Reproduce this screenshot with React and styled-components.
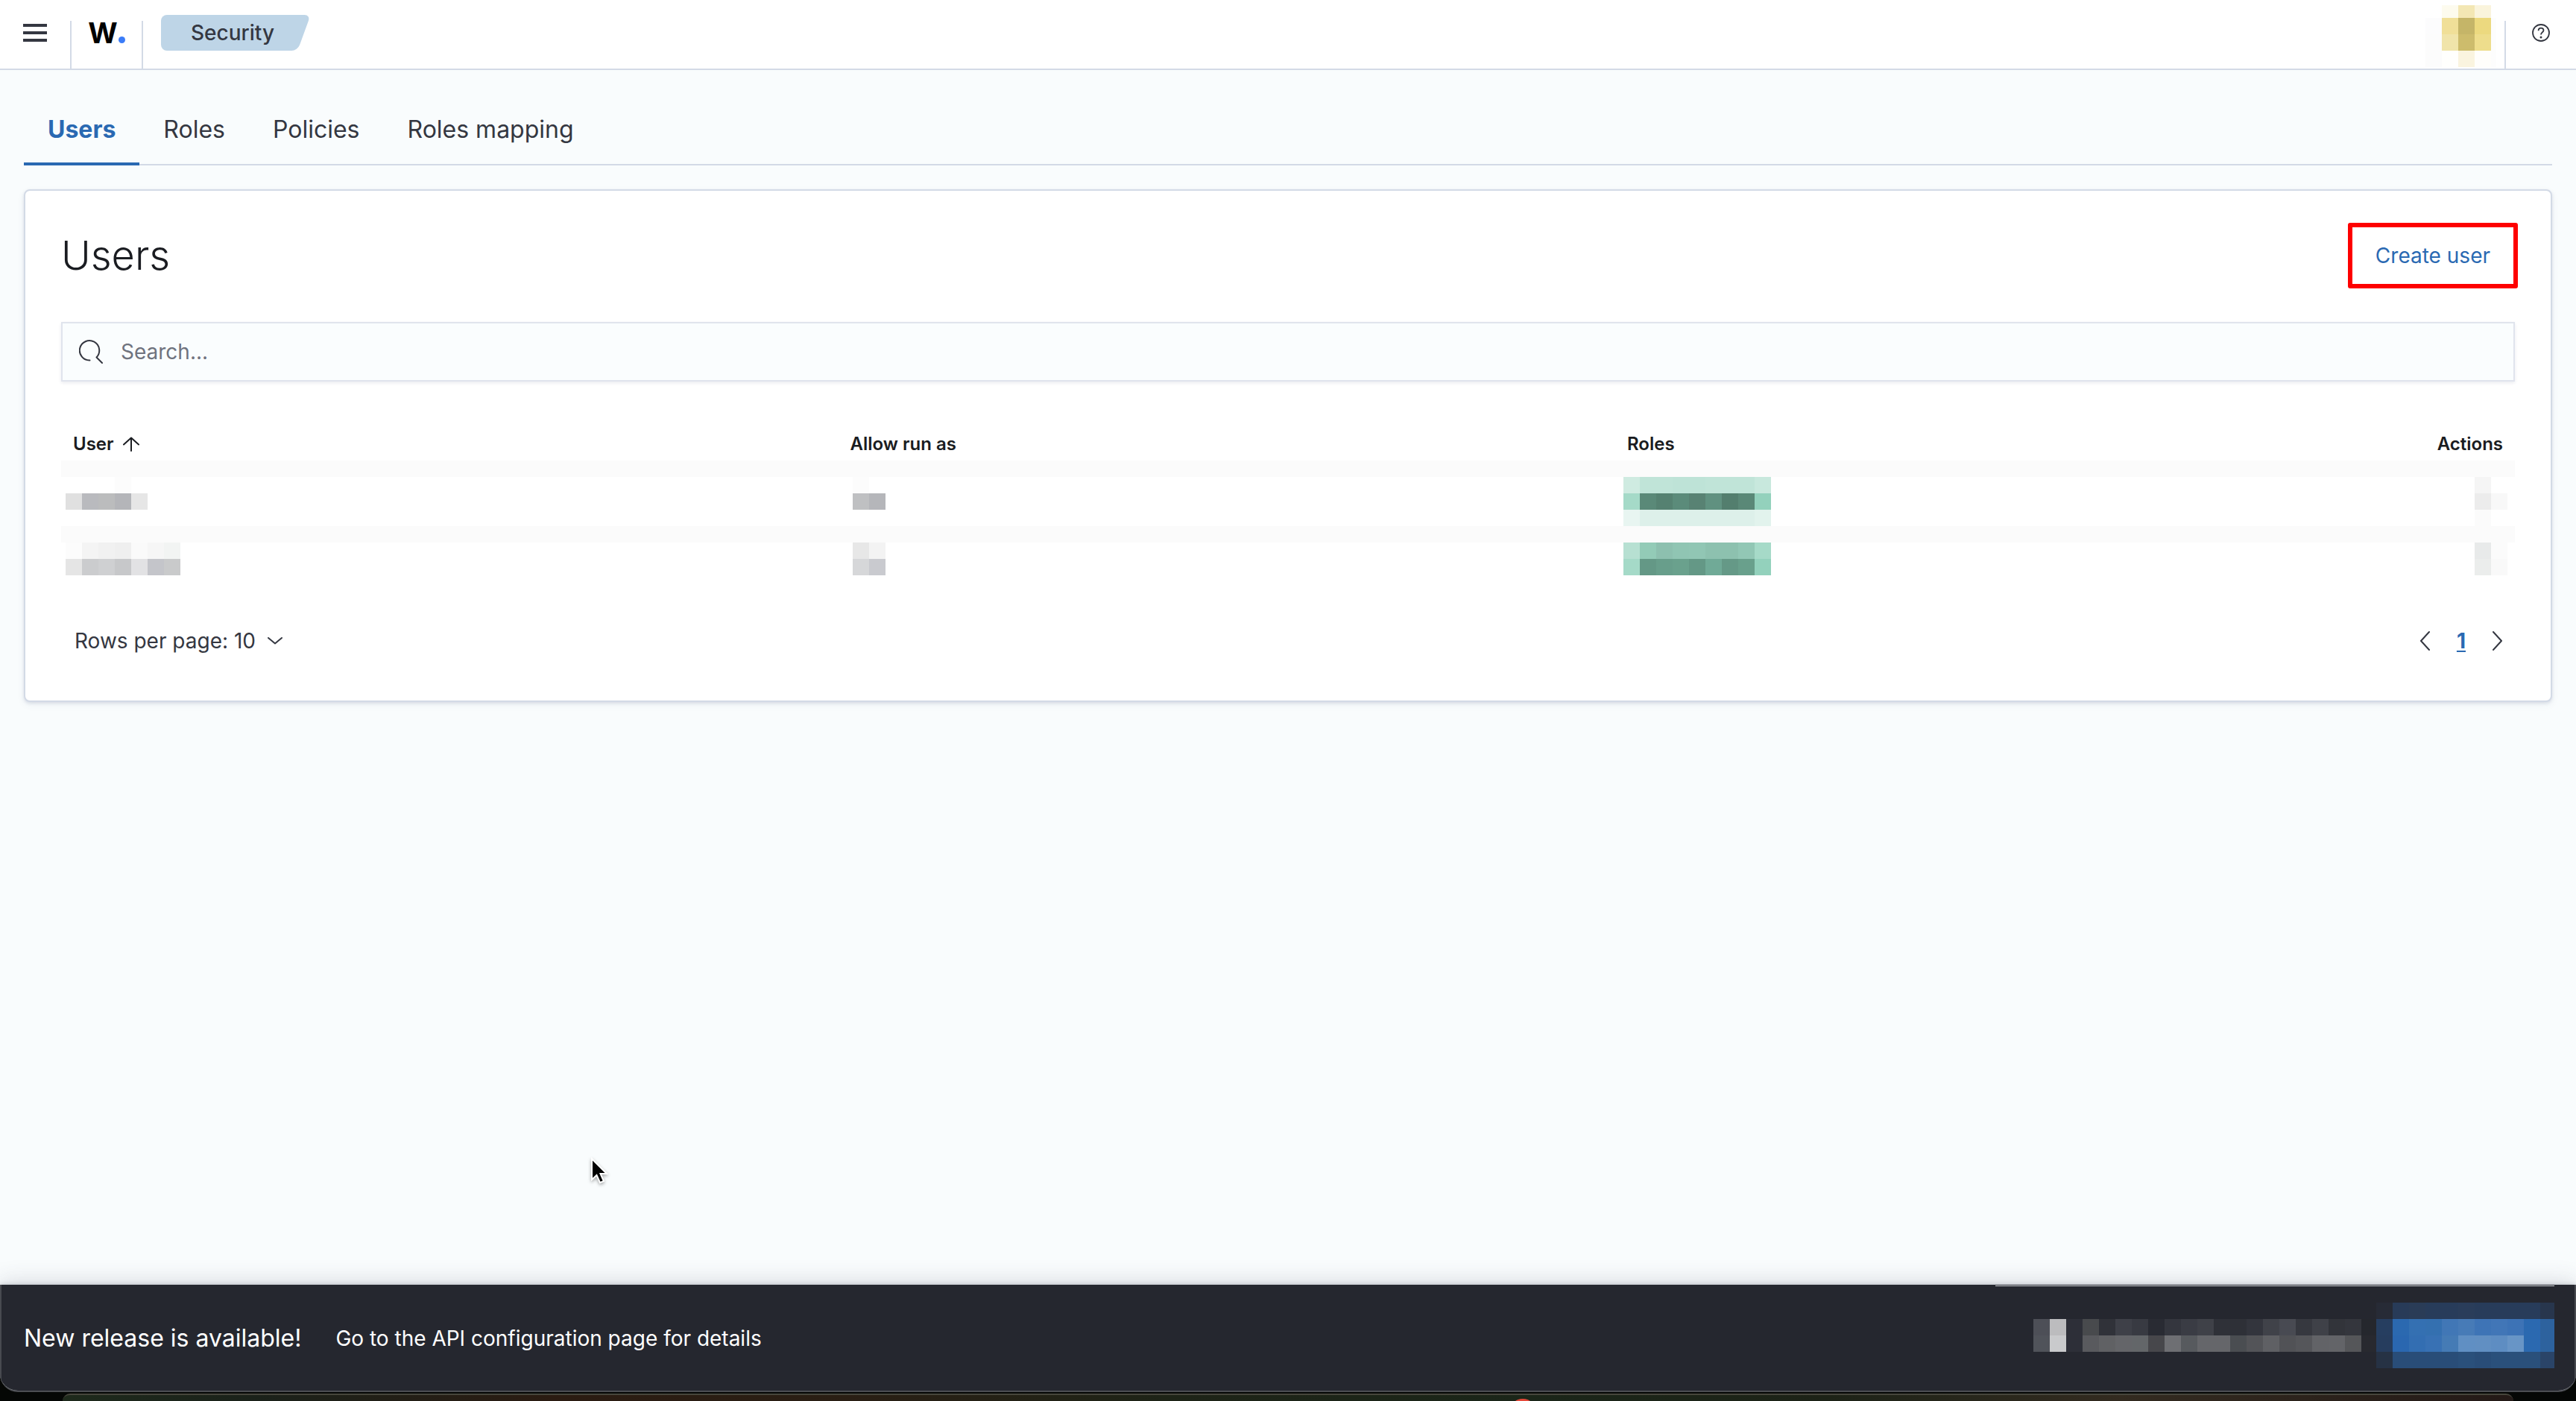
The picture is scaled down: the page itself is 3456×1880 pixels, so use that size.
import React from 'react'
import styled, { createGlobalStyle, ThemeProvider } from 'styled-components'

const theme = {
  colors: {
    text: '#343741',
    title: '#1a1c21',
    subdued: '#6f737e',
    primary: '#2a69b2',
    border: '#d3dae6',
    page: '#f9fcfd',
    bar: '#25272f',
  },
}

const GlobalStyle = createGlobalStyle`
  * { box-sizing: border-box; }
  body {
    margin: 0;
    background: #000;
    font-family: Inter, "Liberation Sans", sans-serif;
    font-size: 28px;
    line-height: 40px;
    color: ${theme.colors.text};
  }
  button, input { font: inherit; color: inherit; }
  button { margin: 0; padding: 0; border: 0; background: none; cursor: pointer; }
`

const Desktop = styled.div`
  min-height: 100vh;
  display: flex;
  flex-direction: column;
  overflow: hidden;
  background: #050705;
`

const Window = styled.div`
  flex: 1;
  display: flex;
  flex-direction: column;
  overflow: hidden;
  border-bottom: 2px solid #4c4e53;
  border-radius: 0 0 24px 24px;
  background: ${({ theme }) => theme.colors.page};
`

/* header */

const Header = styled.header`
  display: flex;
  height: 94px;
  border-bottom: 2px solid ${({ theme }) => theme.colors.border};
  background: #fff;
`

const HeaderItem = styled.div`
  display: flex;
  align-items: center;
  justify-content: center;
  width: 94px;
  padding-bottom: 4px;
`

const IconButton = styled.button`
  display: flex;
  align-items: center;
  justify-content: center;
`

const Divider = styled.div`
  width: 2px;
  height: 64px;
  align-self: flex-end;
  background: ${({ theme }) => theme.colors.border};
`

const Logo = styled.a`
  display: flex;
  align-items: baseline;
  gap: 1px;
  color: #000;
  font-size: 38px;
  font-weight: 700;
  text-decoration: none;
`

const LogoDot = styled.span`
  width: 9px;
  height: 9px;
  border-radius: 50%;
  background: #3b7cf8;
`

const Breadcrumbs = styled.nav`
  flex: 1;
  display: flex;
  align-items: center;
  padding: 0 0 4px 24px;
`

const Crumb = styled.span`
  position: relative;
  z-index: 0;
  height: 48px;
  padding: 0 48px 0 40px;
  line-height: 48px;
  font-weight: 500;

  &::before, &::after {
    content: '';
    position: absolute;
    z-index: -1;
    top: 0;
    bottom: 0;
    background: #bed5e7;
  }
  &::before {
    left: 0;
    right: 40px;
    border-radius: 8px 0 0 8px;
  }
  &::after {
    left: 40px;
    right: 8px;
    border-radius: 0 8px 8px 0;
    transform: skewX(-20deg);
  }
`

const UserMenu = styled.button`
  display: flex;
  align-self: flex-start;
  padding: 7px 11px 0 0;
`

/* tabs */

const Main = styled.main`
  position: relative;
  flex: 1;
  padding: 32px;
`

const Tabs = styled.div`
  display: flex;
  height: 96px;
  margin-bottom: 32px;
  box-shadow: inset 0 -2px 0 ${({ theme }) => theme.colors.border};
`

const Tab = styled.button`
  padding: 0 32px;
  font-size: 32px;
  font-weight: ${({ $active }) => ($active ? 700 : 400)};
  color: ${({ $active, theme }) => ($active ? theme.colors.primary : theme.colors.text)};
  border-top: 4px solid transparent;
  border-bottom: 4px solid ${({ $active, theme }) => ($active ? theme.colors.primary : 'transparent')};
`

/* panel */

const Panel = styled.section`
  padding: 43px 48px 56px;
  border: 2px solid ${({ theme }) => theme.colors.border};
  border-radius: 8px;
  background: #fff;
  box-shadow: 0 2px 4px rgba(60, 70, 110, 0.14), 0 4px 12px rgba(60, 70, 110, 0.05);
`

const PanelHeader = styled.div`
  display: flex;
  align-items: center;
  justify-content: space-between;
  height: 88px;
  margin: 0 -4px 45px 0;
`

const Title = styled.h1`
  margin: 0;
  font-size: 54px;
  font-weight: 300;
  line-height: 64px;
  color: ${({ theme }) => theme.colors.title};
`

const CreateButton = styled.button`
  height: 88px;
  padding: 0 31px;
  border: 6px solid #fe0000;
  border-radius: 3px;
  color: ${({ theme }) => theme.colors.primary};
`

const SearchBox = styled.label`
  display: flex;
  align-items: center;
  gap: 24px;
  height: 80px;
  padding: 0 22px;
  border: 2px solid #e0e4ed;
  background: #fafdfe;
  box-shadow: 0 2px 4px rgba(60, 70, 110, 0.1);
`

const SearchInput = styled.input`
  flex: 1;
  padding: 0;
  border: 0;
  outline: 0;
  background: transparent;

  &::placeholder {
    color: ${({ theme }) => theme.colors.subdued};
    opacity: 1;
  }
`

const Table = styled.table`
  width: 100%;
  margin-top: 58px;
  table-layout: fixed;
  border-collapse: separate;
  border-spacing: 0;
`

const HeadCell = styled.th`
  width: ${({ $width }) => $width || 'auto'};
  height: 48px;
  padding: 4px 16px 0;
  vertical-align: middle;
  text-align: ${({ $align }) => $align || 'left'};
  font-size: 24px;
  font-weight: 600;
  line-height: 36px;
  color: ${({ theme }) => theme.colors.title};
`

const SortButton = styled.button`
  display: flex;
  align-items: center;
  gap: 12px;
`

const Cell = styled.td`
  height: 88px;
  padding: 0 10px 0 ${({ $inset }) => $inset || 0}px;
  vertical-align: top;
  border-top: 22px solid #fbfbfb;
`

const Mosaic = styled.div`
  display: grid;
  grid-template-columns: repeat(${({ $columns }) => $columns}, 22px);
  grid-auto-rows: 22px;
  justify-content: ${({ $align }) => $align || 'start'};
`

const Tile = styled.span`
  background: ${({ $color }) => $color};
`

const Pagination = styled.div`
  display: flex;
  align-items: center;
  justify-content: space-between;
  height: 48px;
  margin-top: 42px;
  padding: 0 16px 0 18px;
`

const RowsButton = styled.button`
  display: flex;
  align-items: center;
  gap: 16px;
`

const Pages = styled.nav`
  display: flex;
  align-items: center;
  gap: 36px;
`

const PageLink = styled.a`
  color: ${({ theme }) => theme.colors.primary};
  font-weight: 700;
  text-decoration: underline;
  text-decoration-thickness: 2px;
  text-underline-offset: 3px;
`

const Pointer = styled.svg`
  position: absolute;
  left: 790px;
  top: 1458px;
  filter: drop-shadow(0 2px 2px rgba(0, 0, 0, 0.35));
`

/* release bar */

const ReleaseBar = styled.footer`
  position: relative;
  display: flex;
  align-items: center;
  gap: 46px;
  height: 142px;
  padding: 2px 29px 0 32px;
  background: ${({ theme }) => theme.colors.bar};
  color: #fff;
  box-shadow: inset 2px 0 0 #484a50, inset -2px 0 0 #484a50, 0 0 6px rgba(30, 40, 60, 0.25), 0 -4px 28px rgba(60, 60, 90, 0.18);
`

const BarLine = styled.div`
  position: absolute;
  top: 1px;
  right: 29px;
  width: 750px;
  height: 1px;
  background: #d3d6da;
`

const ReleaseTitle = styled.strong`
  font-size: 32px;
  font-weight: 400;
`

const BarActions = styled.div`
  display: flex;
  align-items: center;
  margin-left: auto;
  padding-bottom: 8px;
`

const BarButton = styled.button`
  display: flex;
  overflow: hidden;
  width: ${({ $width }) => $width || 'auto'};
`

/* dock under the window */

const Dock = styled.div`
  position: relative;
  height: 10px;
  margin: 2px 84px 0;
  overflow: hidden;
  border-top: 2px solid #47463c;
  border-radius: 34px 34px 0 0;
  background: linear-gradient(90deg, #1e2a1c 0%, #1b221a 8%, #2b1c12 20%, #2a1f14 32%, #1e2417 45%, #1b2619 60%, #1d2317 72%, #332b20 84%, #241a17 100%);
`

const DockBadge = styled.span`
  position: absolute;
  top: 5px;
  left: 1941px;
  width: 36px;
  height: 36px;
  border-radius: 50%;
  background: #e5493a;
`

const avatar = [
  ['#fff', '#fdfbee', '#f3e7b4', '#faf4dc', '#fff'],
  ['#fcfcfd', '#f0df98', '#c5b568', '#ecd97f', '#fdfdfd'],
  ['#fcfcfc', '#f0e4aa', '#cdbc6c', '#eedd8c', '#fdfdfd'],
  ['#fcfcfc', '#fffffd', '#faf4df', '#fffefb', '#fdfdfd'],
]

const rows = [
  {
    user: [
      ['#fff', '#fff', '#fff', '#fcfcfc', '#fff'],
      ['#e0e0e0', '#b9babe', '#bbbcbd', '#b4b5b9', '#e6e6e6'],
    ],
    runAs: [
      ['#fcfcfc', '#fff'],
      ['#bfc0c2', '#b5b6ba'],
    ],
    roles: [
      ['#cfebe1', '#c0e4d8', '#c0e4d8', '#bee3d7', '#bee3d7', '#c0e4d8', '#c0e4d8', '#c0e4d8', '#c8e8dd'],
      ['#a5dac8', '#5a8978', '#558171', '#5b8b7a', '#588273', '#609180', '#537e6e', '#5a8877', '#93d1bc'],
      ['#e8f5f1', '#ddf0ea', '#ddf0ea', '#ddf0ea', '#ddf0ea', '#ddf0ea', '#ddf0ea', '#ddf0ea', '#e2f3ed'],
    ],
    actions: [
      ['#f5f5f5', '#fff'],
      ['#ececec', '#f8f8f8'],
      ['#fbfbfb', '#fff'],
    ],
  },
  {
    user: [
      ['#fcfcfc', '#f4f4f4', '#f1f1f1', '#efefef', '#fafafa', '#f6f6f6', '#f2f4f3'],
      ['#e5e5e5', '#cbccce', '#cfd0d2', '#c7c8ca', '#e2e2e4', '#c4c5ca', '#c9cacb'],
    ],
    runAs: [
      ['#e7e7e7', '#f3f3f3'],
      ['#d6d7d9', '#c9cacf'],
    ],
    roles: [
      ['#b7e0d2', '#93cbb7', '#8dc0af', '#90c5b3', '#91c6b4', '#8dc1af', '#8dc1af', '#92c7b5', '#a6dac8'],
      ['#a5dac8', '#649886', '#689e8b', '#6aa18d', '#649886', '#70aa97', '#659987', '#69a08c', '#93d1bc'],
    ],
    actions: [
      ['#e8eaea', '#fbfbfb'],
      ['#ebedec', '#f9f9f9'],
    ],
  },
]

const dismiss = [
  ['#4d4f57', '#bcbcbe', '#2d2f38', '#484a4d', '#303239', '#3e4048', '#383a42', '#292b33', '#34363e', '#3a3c44', '#3f4148', '#2f3138', '#2e3037', '#33353d', '#404249', '#484a52', '#36383f', '#3f4148', '#32343a', '#34363d', '#25272d'],
  ['#50535a', '#c9cacc', '#2d2f38', '#595a5e', '#606164', '#646569', '#636669', '#47474b', '#6e6f73', '#575a5e', '#65666a', '#65666a', '#4a4d51', '#535458', '#5f6064', '#515256', '#55565a', '#626367', '#636468', '#555659', '#28292f'],
]

const configure = [
  ['#272b36', '#283b58', '#2a3c57', '#283c5a', '#283c5a', '#2a3d5a', '#283c5a', '#283c5a', '#283c5a', '#283c5a', '#28364d'],
  ['#263e60', '#2b69b0', '#3470b2', '#3470b0', '#4177b6', '#477bb7', '#3e74b6', '#4176b7', '#3d73b6', '#2b69b0', '#2d629e'],
  ['#263d5e', '#2a67b0', '#336eb2', '#3871b4', '#457bb5', '#608fc3', '#618fc2', '#5e8dc2', '#6895c6', '#2b69b0', '#2d629e'],
  ['#263244', '#294d78', '#294d78', '#294d78', '#294d78', '#2a507b', '#294d78', '#2a507b', '#2a507b', '#2a507b', '#2a4468'],
]

const AvatarClip = styled.div`
  width: 95px;
  overflow: hidden;

  ${Mosaic} {
    grid-template-rows: 17px;
  }
`

const Redacted = ({ tiles, align }) => (
  <Mosaic $columns={tiles[0].length} $align={align} aria-hidden="true">
    {tiles.flat().map((color, i) => (
      <Tile key={i} $color={color} />
    ))}
  </Mosaic>
)

const Stroke = ({ width, height, d, strokeWidth = 2 }) => (
  <svg width={width} height={height} viewBox={`0 0 ${width} ${height}`} fill="none"
    stroke="currentColor" strokeWidth={strokeWidth} strokeLinecap="round" strokeLinejoin="round" aria-hidden="true">
    <path d={d} />
  </svg>
)

const MenuIcon = () => (
  <svg width="32" height="24" fill={theme.colors.text} aria-hidden="true">
    <rect width="32" height="4" />
    <rect y="10" width="32" height="4" />
    <rect y="20" width="32" height="4" />
  </svg>
)

const HelpIcon = () => (
  <svg width="24" height="24" viewBox="0 0 24 24" fill="none" stroke={theme.colors.text} strokeWidth="1.8" aria-hidden="true">
    <circle cx="12" cy="12" r="11" />
    <path d="M8.6 9.2C8.6 7 10 5.7 12 5.7s3.5 1.2 3.5 3.1c0 2.6-3.5 2.5-3.5 5.8" />
    <circle cx="12" cy="18" r="1.5" fill={theme.colors.text} stroke="none" />
  </svg>
)

const AppHeader = () => (
  <Header>
    <HeaderItem>
      <IconButton aria-label="Toggle navigation"><MenuIcon /></IconButton>
    </HeaderItem>
    <Divider />
    <HeaderItem>
      <Logo href="#home">W<LogoDot /></Logo>
    </HeaderItem>
    <Divider />
    <Breadcrumbs aria-label="Breadcrumbs">
      <Crumb>Security</Crumb>
    </Breadcrumbs>
    <UserMenu aria-label="Account">
      <AvatarClip><Redacted tiles={avatar} /></AvatarClip>
    </UserMenu>
    <Divider />
    <HeaderItem>
      <IconButton aria-label="Help"><HelpIcon /></IconButton>
    </HeaderItem>
  </Header>
)

const UsersTable = () => (
  <Table>
    <thead>
      <tr>
        <HeadCell scope="col">
          <SortButton>
            User
            <Stroke width={22} height={20} d="M11 19V2M1 10.500L11 1.500L21 10.500" />
          </SortButton>
        </HeadCell>
        <HeadCell scope="col">Allow run as</HeadCell>
        <HeadCell scope="col">Roles</HeadCell>
        <HeadCell scope="col" $width="5%" $align="right">Actions</HeadCell>
      </tr>
    </thead>
    <tbody>
      {rows.map((row, i) => (
        <tr key={i}>
          <Cell $inset={6}><Redacted tiles={row.user} /></Cell>
          <Cell $inset={20}><Redacted tiles={row.runAs} /></Cell>
          <Cell $inset={11}><Redacted tiles={row.roles} /></Cell>
          <Cell><Redacted tiles={row.actions} align="end" /></Cell>
        </tr>
      ))}
    </tbody>
  </Table>
)

class App extends React.Component {
  state = { tab: 'Users' }

  render() {
    const { tab } = this.state
    return (
      <ThemeProvider theme={theme}>
        <GlobalStyle />
        <Desktop>
          <Window>
            <AppHeader />
            <Main>
              <Tabs role="tablist">
                {['Users', 'Roles', 'Policies', 'Roles mapping'].map(name => (
                  <Tab key={name} role="tab" aria-selected={tab === name} $active={tab === name}
                    onClick={() => this.setState({ tab: name })}>
                    {name}
                  </Tab>
                ))}
              </Tabs>
              <Panel>
                <PanelHeader>
                  <Title>Users</Title>
                  <CreateButton>Create user</CreateButton>
                </PanelHeader>
                <SearchBox>
                  <Stroke width={32} height={32} d="M14.500 27.500A13.200 13.200 0 1 1 23.500 23.500L31 31" />
                  <SearchInput type="search" placeholder="Search..." aria-label="Search users" />
                </SearchBox>
                <UsersTable />
                <Pagination>
                  <RowsButton aria-haspopup="true">
                    Rows per page: 10
                    <Stroke width={20} height={12} d="M1 2L10 9.500L19 2" />
                  </RowsButton>
                  <Pages aria-label="Pagination">
                    <IconButton aria-label="Previous page">
                      <Stroke width={14} height={26} d="M13 1L2 13L13 25" />
                    </IconButton>
                    <PageLink href="#page-1">1</PageLink>
                    <IconButton aria-label="Next page">
                      <Stroke width={14} height={26} d="M1 1L12 13L1 25" />
                    </IconButton>
                  </Pages>
                </Pagination>
              </Panel>
              <Pointer width="26" height="38" viewBox="0 0 26 38" aria-hidden="true">
                <path d="M4 3V31L10.500 25L15 35L20 33L15.500 23H24Z" fill="#000" stroke="#fff" strokeWidth="2" />
              </Pointer>
            </Main>
            <ReleaseBar>
              <BarLine />
              <ReleaseTitle>New release is available!</ReleaseTitle>
              <span>Go to the API configuration page for details</span>
              <BarActions>
                <BarButton aria-label="Dismiss" $width="460px"><Redacted tiles={dismiss} /></BarButton>
                <BarButton aria-label="Configuration" $width="239px"><Redacted tiles={configure} /></BarButton>
              </BarActions>
            </ReleaseBar>
          </Window>
          <Dock><DockBadge /></Dock>
        </Desktop>
      </ThemeProvider>
    )
  }
}

export default App
